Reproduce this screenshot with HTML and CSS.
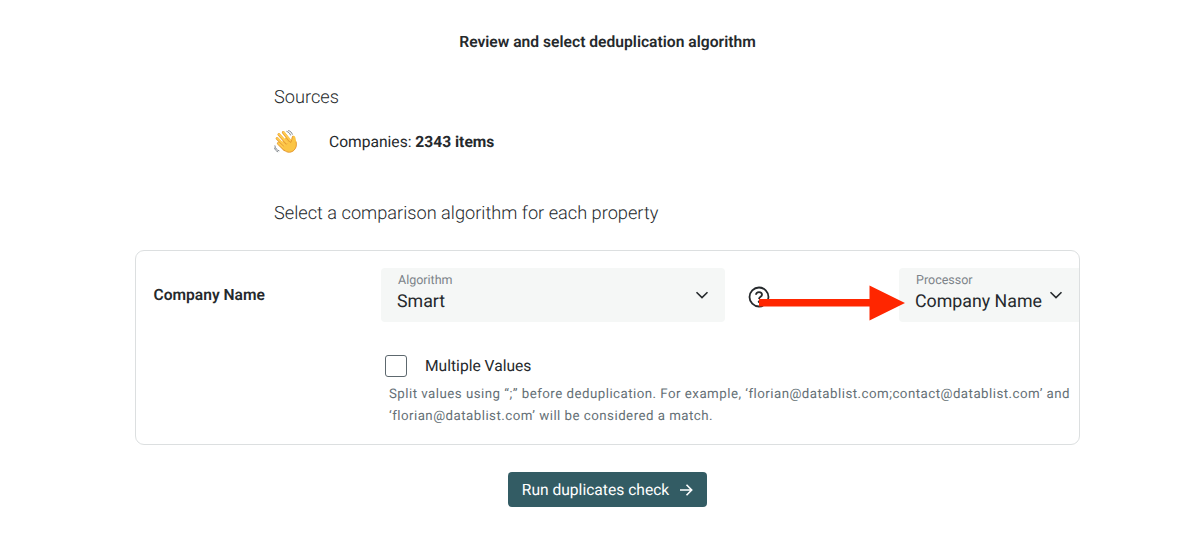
FILE: index.html
```html
<!DOCTYPE html>
<html lang="en">

<head>
    <meta charset="UTF-8">
    <meta name="viewport" content="width=device-width, initial-scale=1.0">
    <title>Deduplication</title>
    <link rel="stylesheet" href="styles.css">
</head>

<body>
    <div class="dedupe">
        <h1 class="dedupe_title"><span>Review and select deduplication algorithm</span></h1>
        <div class="dedupe_intro">
            <h2 class="section_title">Sources</h2>
            <div class="source">
                <svg class="source_icon" viewBox="0 0 24 24" fill="none">
                    <g stroke-linecap="round" stroke-linejoin="round">
                        <path d="M8.5 13L12.2 19.4L17.5 17.5L16.8 11.2L12 8.5Z" fill="#fbc545" stroke="#fbc545" stroke-width="2" />
                        <path d="M4.2 13.4L10.6 19.8M3 8.4L10.2 16M4.8 4.4L12.4 13.2M9.2 2.4L15.8 10.6" stroke="#e39a35" stroke-width="2.7" />
                        <path d="M4.5 13.2L11 19.2M3.3 8.2L11 15.6M5.1 4.2L13 12.8M9.5 2.2L16.2 10.4" stroke="#ffcb4e" stroke-width="2" />
                        <path d="M16.4 12C18 10.5 17.2 7.5 18.8 5.8C21.6 4.8 21.6 8.8 22.3 11.5C23 15 22.7 17.5 20.2 20.3C17.5 23.2 13 23 10.2 20L9 17Z" fill="#fbc545" />
                        <path d="M16.7 12.6C18.2 10.8 17.4 8 18.7 6.2M10.5 20.4C13.5 23.3 17.5 22.7 20.2 20C22.4 17.8 22.7 15 22.2 12" stroke="#e08e2c" stroke-width=".8" />
                        <path d="M12.8 1.4C14.6 2 16 3.3 16.5 5M14.6 .6C16.5 1.2 17.8 2.4 18.3 4.3M.9 15.8C1.2 18.3 2.7 20.1 5 20.8M.5 18C1 19.8 2.1 21.1 3.8 21.8" stroke="#666d74" stroke-width=".8" />
                    </g>
                </svg>
                <span class="source_name">Companies: <b>2343 items</b></span>
            </div>
            <h2 class="section_title">Select a comparison algorithm for each property</h2>
        </div>
        <div class="property_card">
            <div class="property_name"><span>Company Name</span></div>
            <div class="property_options">
                <div class="option_row">
                    <div class="select select_algorithm">
                        <div class="select_text">
                            <div class="select_label">Algorithm</div>
                            <div class="select_value">Smart</div>
                        </div>
                        <svg class="chevron" viewBox="0 0 14 8"><path d="M1.5 1.2L7 6.6L12.5 1.2" /></svg>
                    </div>
                    <svg class="help_icon" viewBox="0 0 22 22">
                        <circle cx="11" cy="11" r="9.5" />
                        <path d="M8 8.8C8.1 7 9.3 6.1 11 6.1C12.8 6.1 14 7.1 14 8.7C14 10.7 11 10.9 11 13.1" />
                        <circle class="help_dot" cx="11" cy="15.7" r="1.2" />
                    </svg>
                    <div class="select select_processor">
                        <div class="select_text">
                            <div class="select_label">Processor</div>
                            <div class="select_value">Company Name</div>
                        </div>
                        <svg class="chevron" viewBox="0 0 14 8"><path d="M1.5 1.2L7 6.6L12.5 1.2" /></svg>
                    </div>
                </div>
                <div class="checkbox_row">
                    <div class="checkbox"></div>
                    <span class="checkbox_label">Multiple Values</span>
                </div>
                <div class="hint">Split values using “;” before deduplication. For example, ‘florian@datablist.com;contact@datablist.com’ and<br>‘florian@datablist.com’ will be considered a match.</div>
            </div>
            <!-- pointer to the processor field -->
            <svg class="pointer" viewBox="0 0 147 36">
                <path d="M0 14H110.5V0.5L146 18L110.5 35.5V21.5H0Z" />
            </svg>
        </div>
        <div class="run_button">
            <span>Run duplicates check</span>
            <svg class="run_arrow" viewBox="0 0 14 14"><path d="M1 7H12.5M7.5 1.8L12.7 7L7.5 12.2" /></svg>
        </div>
    </div>
</body>

</html>
```

FILE: styles.css
```css
body {
    margin: 0;
    background-color: white;
    color: #25292c;
    font-family: Roboto, sans-serif;
    font-size: 15.6px;
    text-rendering: geometricPrecision;
}

.dedupe {
    width: 945px;
    margin-left: 135px;
    padding-top: 30px;
}

.dedupe_title {
    margin: 0;
    font-size: 15.65px;
    line-height: 24px;
    font-weight: 600;
    text-align: center;
}

.dedupe_intro {
    padding: 32px 0px 24px 139px;
}

.section_title {
    margin: 0;
    font-size: 18.2px;
    line-height: 24px;
    font-weight: 300;
}

.source {
    display: flex;
    align-items: center;
    height: 24px;
    margin: 20px 0px 48px;
}

.source_icon {
    width: 24px;
    height: 24px;
    margin-right: 31px;
}

.source b {
    font-weight: 700;
}

.property_card {
    position: relative;
    display: flex;
    box-sizing: border-box;
    height: 195px;
    border: 1px solid #dcdfe0;
    border-radius: 9px;
    padding: 17px 0px 0px 17.5px;
}

.property_name {
    width: 227.5px;
    line-height: 54px;
    font-weight: 600;
}

.property_options {
    width: 698px;
}

.option_row {
    display: flex;
    align-items: center;
}

.select {
    display: flex;
    box-sizing: border-box;
    height: 54px;
    padding: 5px 16px 0px 16px;
    background-color: #f5f7f6;
    border-radius: 4px;
    white-space: nowrap;
}

.select_algorithm {
    width: 344px;
    justify-content: space-between;
}

.select_processor {
    width: 180px;
    margin-left: 129px;
    border-radius: 4px 0px 0px 4px;
    justify-content: space-between;
}

.select_label {
    padding-left: 1px;
    color: #7c8389;
    font-size: 12.5px;
    line-height: 16px;
}

.select_value {
    font-size: 17.8px;
    line-height: 26px;
}

.chevron {
    flex: none;
    width: 14px;
    height: 8px;
    margin-top: 18px;
    fill: none;
    stroke: #25292c;
    stroke-width: 1.6;
}

.help_icon {
    width: 22px;
    height: 22px;
    margin: 3px 0px 0px 23px;
    fill: none;
    stroke: #25292c;
    stroke-width: 1.8;
}

.help_icon .help_dot {
    fill: #25292c;
    stroke: none;
}

.checkbox_row {
    display: flex;
    align-items: center;
    gap: 18px;
    height: 22px;
    margin: 33px 0px 0px 4px;
}

.checkbox {
    box-sizing: border-box;
    width: 22px;
    height: 22px;
    border: 1px solid #5d686e;
    border-radius: 3px;
}

.hint {
    margin: 7px 0px 0px 8px;
    color: #657076;
    font-size: 13.3px;
    line-height: 22px;
    letter-spacing: 0.47px;
    white-space: nowrap;
}

/* lies over the help icon and the select */
.pointer {
    position: absolute;
    left: 623px;
    top: 33.5px;
    width: 147px;
    height: 36px;
    fill: #ff2600;
}

.run_button {
    display: flex;
    align-items: center;
    justify-content: center;
    gap: 10px;
    width: 199px;
    height: 35px;
    margin: 27px auto 0px;
    background-color: #335c64;
    border-radius: 4px;
    color: white;
}

.run_arrow {
    width: 14px;
    height: 14px;
    fill: none;
    stroke: white;
    stroke-width: 1.6;
}
```
